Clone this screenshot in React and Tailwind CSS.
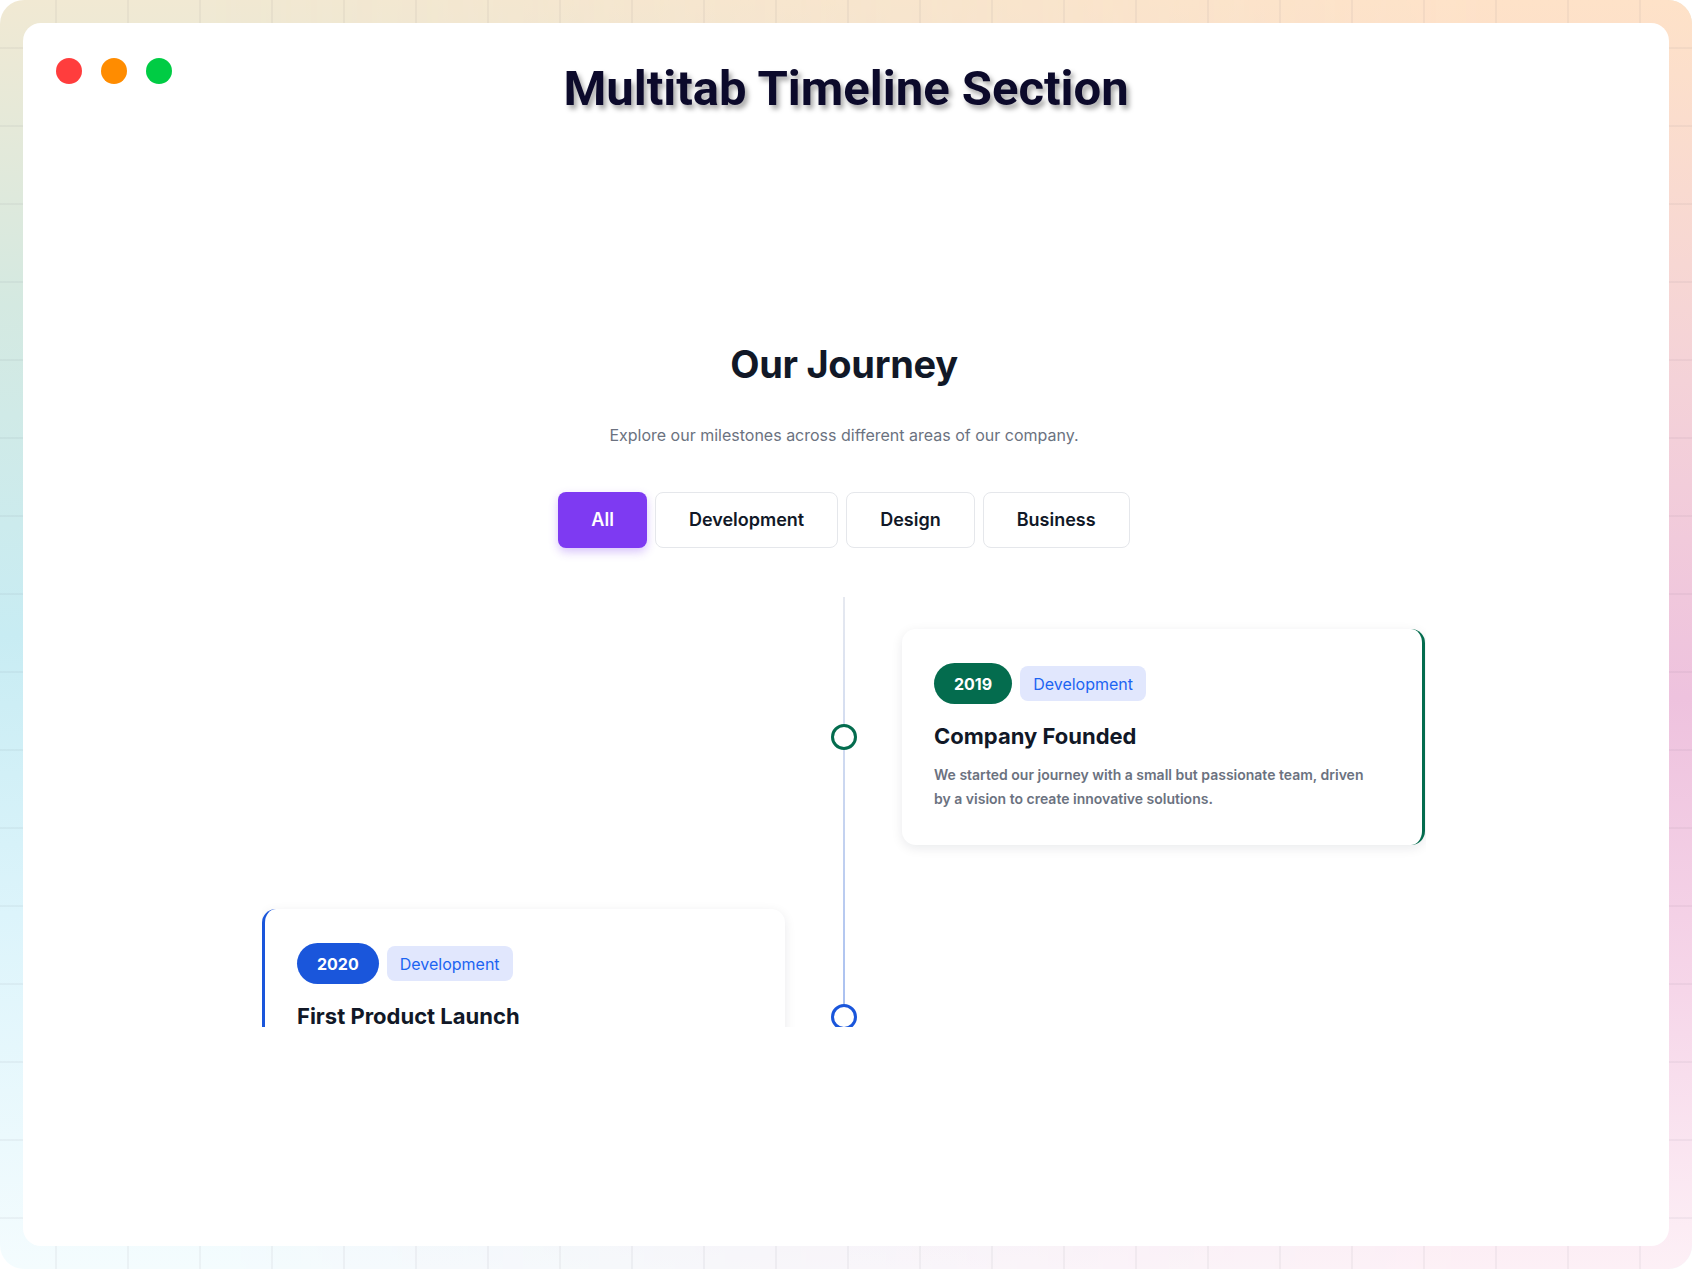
const TABS = [
  { id: 'all', label: 'All', active: true },
  { id: 'dev', label: 'Development' },
  { id: 'design', label: 'Design' },
  { id: 'biz', label: 'Business' },
];

const MILESTONES = [
  {
    year: '2019',
    tag: 'Development',
    title: 'Company Founded',
    text: 'We started our journey with a small but passionate team, driven by a vision to create innovative solutions.',
    side: 'right',
    pill: 'bg-[#046c4e]',
    edge: 'border-r-[3px] border-[#046c4e]',
    ring: 'border-[#046c4e]',
  },
  {
    year: '2020',
    tag: 'Development',
    title: 'First Product Launch',
    text: 'Our first product hit the market, bringing a fresh approach to problems our customers faced every day.',
    side: 'left',
    pill: 'bg-[#1a56db]',
    edge: 'border-l-[3px] border-[#1a56db]',
    ring: 'border-[#1a56db]',
  },
];

const MilestoneCard = ({ m }) => (
  <div
    className={`w-[523px] h-[216px] rounded-[14px] bg-white shadow-[0_3px_12px_rgba(15,23,42,0.09)] pt-[34px] pb-8 pl-8 pr-[44px] ${m.edge}`}
  >
    <div className="flex items-center gap-2">
      <span className={`h-[41px] px-5 rounded-full ${m.pill} text-white font-bold text-base flex items-center`}>
        {m.year}
      </span>
      <span className="h-[35px] px-[13px] rounded-lg bg-[#e1e7fd] text-[#1c64f2] text-base flex items-center">
        {m.tag}
      </span>
    </div>
    <h3 className="mt-[18px] text-[22px] leading-[28px] font-bold text-[#111827]">{m.title}</h3>
    <p className="mt-[13px] text-sm leading-6 font-semibold text-[#6b7280]">{m.text}</p>
  </div>
);

export default function App() {
  return (
    <div className="bg-white font-['Inter',sans-serif]">
      <div className="relative h-[1269px] overflow-hidden rounded-[24px] p-[23px] bg-[linear-gradient(to_bottom,#f1e9d3_0%,#d4e9e1_24%,#c8ecf3_50%,#dcf4fb_72%,#f4fcfe_100%)]">
        <div className="absolute inset-0 bg-[linear-gradient(to_bottom,#fee2c8_0%,#f4d2d8_30%,#eec2de_55%,#f6d6e9_78%,#fdf0f6_100%)] [mask-image:linear-gradient(to_right,transparent_12%,black_88%)]" />
        <div className="absolute inset-0 bg-[linear-gradient(to_right,rgba(60,60,80,0.05)_2px,transparent_2px),linear-gradient(to_bottom,rgba(60,60,80,0.05)_2px,transparent_2px)] [background-size:72px_78px] [background-position:55px_47px]" />

        <div className="relative z-10 h-full rounded-[18px] bg-white">
          <header className="grid grid-cols-[1fr_auto_1fr] items-start px-[33px] pt-[35px]">
            <div className="flex gap-[19px]">
              <span className="w-[26px] h-[26px] rounded-full bg-[#ff3d3d]" />
              <span className="w-[26px] h-[26px] rounded-full bg-[#ff8c00]" />
              <span className="w-[26px] h-[26px] rounded-full bg-[#00cc44]" />
            </div>
            <h1 className="mt-[6px] font-['Roboto',sans-serif] text-[49px] leading-[50px] font-bold text-[#0c0a2b] [text-shadow:3px_4px_5px_rgba(0,0,0,0.35)]">
              Multitab Timeline Section
            </h1>
            <div />
          </header>

          <section className="mt-[227px] pr-[4px] flex flex-col items-center">
            <h2 className="text-[38px] leading-[46px] font-bold tracking-[-0.3px] text-[#111827]">Our Journey</h2>
            <p className="mt-9 text-base leading-6 text-[#6b7280]">
              Explore our milestones across different areas of our company.
            </p>

            <div className="mt-[45px] flex gap-2">
              {TABS.map((t) => (
                <button
                  key={t.id}
                  className={`h-14 px-[33px] rounded-lg text-lg font-semibold ${
                    t.active
                      ? 'bg-[#7e3af2] text-white shadow-[0_4px_10px_rgba(126,58,242,0.3)]'
                      : 'bg-white border border-[#e5e7eb] text-[#111827]'
                  }`}
                >
                  {t.label}
                </button>
              ))}
            </div>

            <div className="relative mt-[49px] w-[1164px] h-[430px] overflow-hidden">
              <div className="absolute left-1/2 -translate-x-1/2 top-0 h-[460px] w-[2px] bg-linear-to-b from-[#e6e9f0] via-[#c5d3f0] to-[#a2bbf0]" />
              {MILESTONES.map((m, i) => (
                <div key={m.year} className={`relative grid grid-cols-2 ${i === 0 ? 'mt-8' : 'mt-16'}`}>
                  {m.side === 'right' ? (
                    <>
                      <div />
                      <div className="pl-[58px]">
                        <MilestoneCard m={m} />
                      </div>
                    </>
                  ) : (
                    <>
                      <div className="flex justify-end pr-[59px]">
                        <MilestoneCard m={m} />
                      </div>
                      <div />
                    </>
                  )}
                  <span
                    className={`absolute left-1/2 top-1/2 -translate-x-1/2 -translate-y-1/2 w-[26px] h-[26px] rounded-full border-[3px] bg-white ${m.ring}`}
                  />
                </div>
              ))}
            </div>
          </section>
        </div>
      </div>
    </div>
  );
}
